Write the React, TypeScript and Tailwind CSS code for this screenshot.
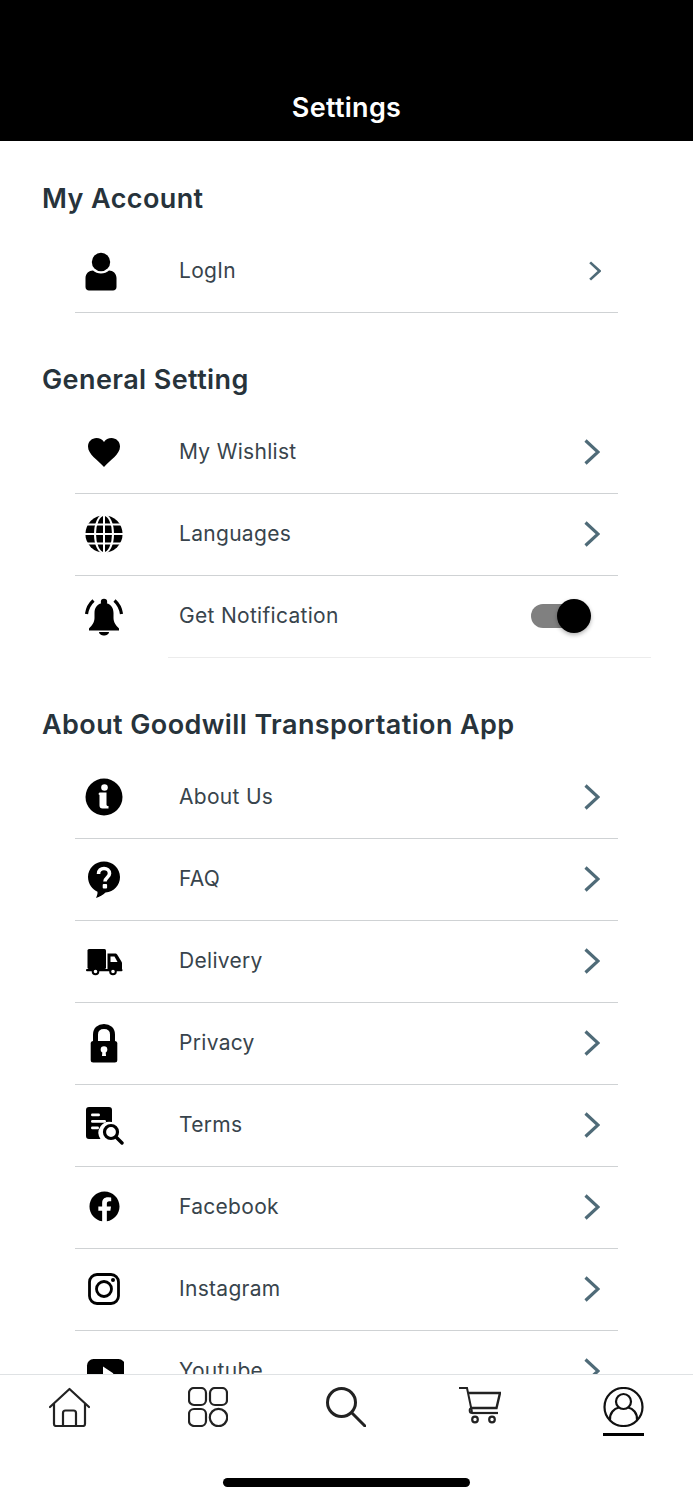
import type { ReactNode } from 'react';
import { FaFacebook } from 'react-icons/fa';

// Icons share a 40x40 box
function Icon({ children }: { children: ReactNode }) {
  return (
    <svg width="40" height="40" viewBox="0 0 40 40" fill="black">
      {children}
    </svg>
  );
}

const UserIcon = () => (
  <Icon>
    <circle cx="17" cy="11" r="9.2" />
    <path d="M1.500 36v-9c0-4.500 3.500-7.500 7.500-7.500 2 1.800 5 3 8 3s6-1.200 8-3c4 0 7.500 3 7.500 7.500v9c0 2-1.500 3.500-3.500 3.500H5c-2 0-3.500-1.500-3.500-3.500z" />
  </Icon>
);

const HeartIcon = () => (
  <Icon>
    <path d="M20 35 C14 28 4 22.500 4 14.500 C4 9.500 8 6 12.500 6 C15.500 6 18.500 7.500 20 10 C21.500 7.500 24.500 6 27.500 6 C32 6 36 9.500 36 14.500 C36 22.500 26 28 20 35 Z" />
  </Icon>
);

const GlobeIcon = () => (
  <Icon>
    <circle cx="20" cy="20" r="18.600" />
    <g fill="none" stroke="white" strokeWidth="2">
      <ellipse cx="20" cy="20" rx="9" ry="19" />
      <path d="M20 0v40M0 20h40M3 10.500h34M3 29.500h34" />
    </g>
  </Icon>
);

const BellIcon = () => (
  <Icon>
    <circle cx="20" cy="5" r="3.200" />
    <path d="M20 6c-6.500 0-9.500 4.500-9.500 10v5c0 4.500-2.500 7.500-5.500 10.500v2h30v-2c-3-3-5.500-6-5.500-10.500v-5C29.500 10.500 26.500 6 20 6z" />
    <path d="M15 35h10c0 2-2.500 3.500-5 3.500s-5-1.500-5-3.500z" />
    <g fill="none" stroke="black" strokeWidth="3.200">
      <path d="M9.500 3.500C5.500 7 3.300 11.500 2.500 17" />
      <path d="M30.500 3.500C34.500 7 36.700 11.500 37.500 17" />
    </g>
  </Icon>
);

const InfoIcon = () => (
  <Icon>
    <circle cx="20" cy="20" r="18.500" />
    <circle cx="20.500" cy="10.500" r="3.300" fill="white" />
    <path d="M15.500 16.500h7v12c0 1 .8 1.500 2 1.500v2.500h-6c-2 0-3-1.200-3-3v-10.500c-.5-.2-1-.5-1-1.200z" fill="white" transform="translate(0 -1)" />
  </Icon>
);

const QuestionIcon = () => (
  <Icon>
    <path d="M20 2.500c-8.800 0-16 6.800-16 15.500 0 7 4.500 12.500 9.500 14.800.2 2.500-.6 4.300-1.500 6.200 3.500-1 7-3 9.500-5.500C30 33 36 26 36 18c0-8.700-7.200-15.500-16-15.500z" />
    <path d="M14.500 15c0-3.500 2.500-5.500 5.500-5.500s5.500 2 5.500 5c0 4-4.500 4-4.500 8" fill="none" stroke="white" strokeWidth="3.600" />
    <rect x="18.700" y="25" width="4.400" height="4.400" rx="1" fill="white" />
  </Icon>
);

const TruckIcon = () => (
  <Icon>
    <rect x="3.500" y="8" width="18.500" height="20" rx="1.500" />
    <path d="M23.500 12.500h7.500c1 0 1.800.5 2.300 1.300l4.700 7.700v7H23.500z" />
    <path d="M26.500 15.500h4l3 5.500h-7z" fill="white" />
    <rect x="2" y="28" width="36.500" height="2.200" rx="1" />
    <g fill="white" stroke="black" strokeWidth="2">
      <circle cx="11.500" cy="30.500" r="2.800" />
      <circle cx="29" cy="30.500" r="2.800" />
    </g>
  </Icon>
);

const LockIcon = () => (
  <Icon>
    <path d="M11.500 19v-7.500c0-5 3.500-8 8.500-8s8.500 3 8.500 8V19" fill="none" stroke="black" strokeWidth="5" />
    <rect x="6.700" y="18" width="26.600" height="21.500" rx="2.500" />
    <circle cx="20" cy="26.500" r="3.300" fill="white" />
    <path d="M18.500 27h3l.5 6h-4z" fill="white" />
  </Icon>
);

const TermsIcon = () => (
  <Icon>
    <path d="M5 2h20c2 0 3 1 3 3v12a11 11 0 0 0-11.500 17H5c-2 0-3-1-3-3V5c0-2 1-3 3-3z" />
    <g fill="white">
      <rect x="7" y="8.500" width="9" height="2.800" rx="1.400" />
      <rect x="7" y="15" width="15" height="2.800" rx="1.400" />
      <rect x="7" y="21.500" width="8" height="2.800" rx="1.400" />
    </g>
    <circle cx="27" cy="27" r="6.500" fill="none" stroke="black" strokeWidth="3.200" />
    <path d="M32 32l6 6" stroke="black" strokeWidth="3.400" strokeLinecap="round" />
  </Icon>
);

const InstagramIcon = () => (
  <Icon>
    <g fill="none" stroke="black" strokeWidth="2.800">
      <rect x="5.500" y="5.500" width="29" height="29" rx="7.500" />
      <circle cx="20" cy="20" r="7.500" />
    </g>
    <circle cx="29" cy="11" r="2" />
  </Icon>
);

const YoutubeIcon = () => (
  <Icon>
    <rect x="3" y="8" width="38" height="29" rx="6.500" />
    <path d="M19 15.500l10.500 7-10.500 7z" fill="white" />
  </Icon>
);

const FacebookIcon = () => (
  <div className="flex h-10 w-10 items-center justify-center">
    <FaFacebook size={31} color="black" />
  </div>
);

const icons: Record<string, ReactNode> = {
  LogIn: <UserIcon />,
  'My Wishlist': <HeartIcon />,
  Languages: <GlobeIcon />,
  'Get Notification': <BellIcon />,
  'About Us': <InfoIcon />,
  FAQ: <QuestionIcon />,
  Delivery: <TruckIcon />,
  Privacy: <LockIcon />,
  Terms: <TermsIcon />,
  Facebook: <FacebookIcon />,
  Instagram: <InstagramIcon />,
  Youtube: <YoutubeIcon />,
};

function Chevron({ small }: { small?: boolean }) {
  return (
    <svg
      width={small ? 12 : 16}
      height={small ? 20 : 26}
      viewBox="0 0 16 26"
      fill="none"
      stroke="#4f6b78"
      strokeWidth={small ? 3.6 : 3.2}
    >
      <path d="M1.500 1.500L14 13L1.500 24.500" />
    </svg>
  );
}

function Row({ label, small }: { label: string; small?: boolean }) {
  return (
    <div className="mx-[75px] flex h-[82px] items-center border-b border-[#cfd2d4] pb-[2px]">
      <div className="flex w-[58px] justify-center">{icons[label]}</div>
      <span className="ml-[46px] text-[21px] leading-none tracking-[0.3px] text-[#38444c]">{label}</span>
      <div className={`ml-auto flex ${small ? 'mr-[17px]' : 'mr-[18px]'}`}>
        <Chevron small={small} />
      </div>
    </div>
  );
}

function NotificationRow() {
  return (
    <div className="ml-[75px] mr-[42px] flex h-[82px] items-center">
      <div className="flex w-[58px] justify-center">{icons['Get Notification']}</div>
      <div className="ml-[35px] flex h-full flex-1 items-center border-b border-[#ececec] pb-[2px] pl-[11px]">
        <span className="text-[21px] leading-none tracking-[0.3px] text-[#38444c]">Get Notification</span>
        <div className="relative ml-auto mr-[68px] h-6 w-[52px] rounded-full bg-[#808080]">
          <div className="absolute right-[-8px] top-[-5px] h-[34px] w-[34px] rounded-full bg-black shadow-[0_2px_4px_rgba(0,0,0,0.3)]" />
        </div>
      </div>
    </div>
  );
}

function Heading({ children }: { children: ReactNode }) {
  return (
    <h2 className="flex h-[65px] items-center pb-[1px] pl-[42px] text-[27px] font-semibold leading-none tracking-[0.4px] text-[#27333b]">
      {children}
    </h2>
  );
}

const aboutRows = ['About Us', 'FAQ', 'Delivery', 'Privacy', 'Terms', 'Facebook', 'Instagram', 'Youtube'];

function TabBar() {
  return (
    <div className="flex h-[126px] shrink-0 flex-col border-t border-[#dfe2e4] bg-white">
      <div className="grid grid-cols-5 pt-3">
        <div className="flex justify-center">
          <svg width="41" height="40" viewBox="0 0 41 40" fill="none" stroke="#222" strokeWidth="2.200" strokeLinejoin="round" strokeLinecap="round">
            <path d="M1 20L20.500 2L40 20" />
            <path d="M5 17v20c0 1 .8 2 2 2h27c1.200 0 2-1 2-2V17" />
            <path d="M14 39V26c0-1.500 1-2.500 2.500-2.500h8c1.500 0 2.500 1 2.500 2.500v13" />
          </svg>
        </div>
        <div className="flex justify-center">
          <svg width="40" height="40" viewBox="0 0 40 40" fill="none" stroke="#222" strokeWidth="2.200">
            <rect x="1" y="1" width="17" height="17" rx="5" />
            <rect x="22" y="1" width="17" height="17" rx="5" />
            <rect x="1" y="22" width="17" height="17" rx="5" />
            <circle cx="30.500" cy="30.500" r="8.700" />
          </svg>
        </div>
        <div className="flex justify-center">
          <svg width="40" height="40" viewBox="0 0 40 40" fill="none" stroke="#222" strokeWidth="3" strokeLinecap="round">
            <circle cx="15.500" cy="15.500" r="14" />
            <path d="M26 26l13 13" />
          </svg>
        </div>
        <div className="flex justify-center pr-[10px]">
          <svg width="42" height="37" viewBox="0 0 42 37" fill="none" stroke="#222" strokeWidth="2">
            <path d="M0 1h8l5 24" strokeWidth="2" />
            <path d="M9 6h32l-3.500 15H12" strokeWidth="2.400" />
            <path d="M13 26h26" strokeWidth="2.200" />
            <path d="M12.500 21c-2.500.5-2.500 5 .5 5" />
            <circle cx="16" cy="32.500" r="2.800" strokeWidth="2.200" />
            <circle cx="33" cy="32.500" r="2.800" strokeWidth="2.200" />
          </svg>
        </div>
        <div className="flex flex-col items-center">
          <svg width="41" height="40" viewBox="0 0 41 40" fill="none" stroke="#111" strokeWidth="2.200">
            <circle cx="20.500" cy="20" r="19" />
            <circle cx="20.500" cy="14.500" r="7.500" />
            <path d="M7 33c-.5-7 4-11.500 9-12.500M34 33c.5-7-4-11.500-9-12.500" />
          </svg>
          <div className="mt-[6px] h-[3px] w-[41px] bg-black" />
        </div>
      </div>
      <div className="mx-auto mb-[13px] mt-auto h-[9px] w-[247px] rounded-full bg-black" />
    </div>
  );
}

export default function App() {
  return (
    <div className="flex h-[1500px] flex-col overflow-hidden bg-white font-['Inter',sans-serif]">
      <header className="flex h-[141px] shrink-0 items-end justify-center bg-black pb-[20px]">
        <h1 className="text-[27px] font-semibold leading-none tracking-[0.3px] text-white">Settings</h1>
      </header>

      <div className="min-h-0 flex-1 overflow-hidden pt-[25px]">
        <Heading>My Account</Heading>
        <Row label="LogIn" small />

        <div className="mt-[34px]">
          <Heading>General Setting</Heading>
          <Row label="My Wishlist" />
          <Row label="Languages" />
          <NotificationRow />
        </div>

        <div className="mt-[34px]">
          <Heading>About Goodwill Transportation App</Heading>
          {aboutRows.map((label) => (
            <Row key={label} label={label} />
          ))}
        </div>
      </div>

      <TabBar />
    </div>
  );
}
